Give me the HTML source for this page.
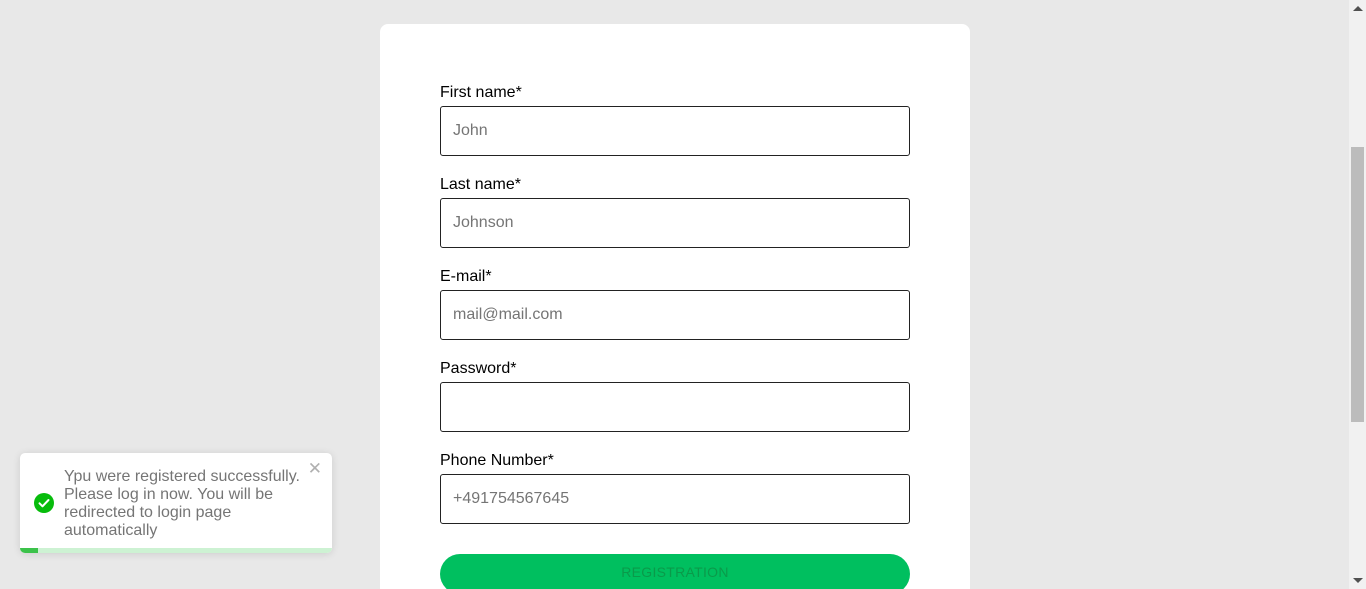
<!DOCTYPE html>
<html><head><meta charset="utf-8"><style>
*{box-sizing:border-box;margin:0;padding:0}
html,body{width:1366px;height:589px;overflow:hidden;background:#e8e8e8;font-family:"Liberation Sans",Arial,sans-serif}
.wrap{position:relative;width:1366px;height:589px;overflow:hidden}
.card{position:absolute;left:380px;top:24px;width:590px;height:580px;background:#fff;border-radius:8px}
.lbl{position:absolute;left:440px;font-size:16px;color:#000}
.inp{position:absolute;left:440px;width:470px;height:50px;border:1px solid #222;border-radius:3px;background:#fff;font-size:16px;color:#757575;padding:14px 12px;line-height:20px}
.btn{position:absolute;left:440px;top:554px;width:470px;height:40px;border-radius:20px;background:#00bf5f;color:#0a9a4a;font-size:14px;text-align:center;line-height:36px;letter-spacing:0.3px}
.sb{position:absolute;left:1349px;top:0;width:17px;height:589px;background:#f1f1f1}
.th{position:absolute;left:1351px;top:147px;width:13px;height:275px;background:#bcbcbc}
.toast{position:absolute;left:20px;top:453px;width:312px;height:100px;background:#fff;border-radius:5px;box-shadow:0 1px 8px rgba(0,0,0,.12);overflow:hidden}
.toast .t{position:absolute;left:44px;top:15px;font-size:16px;line-height:18px;color:#757575;width:250px}
.toast .x{position:absolute;right:10px;top:6px;font-size:17px;color:#b0b0b0}
.bar{position:absolute;left:0;bottom:0;width:312px;height:5px;background:#cdf2d3}
.bar i{position:absolute;left:0;top:0;width:18px;height:5px;background:#3cc24b}
</style></head><body><div class="wrap">
<div class="card"></div>
<div class="lbl" style="top:84px">First name*</div>
<div class="inp" style="top:106px">John</div>
<div class="lbl" style="top:176px">Last name*</div>
<div class="inp" style="top:198px">Johnson</div>
<div class="lbl" style="top:268px">E-mail*</div>
<div class="inp" style="top:290px">mail@mail.com</div>
<div class="lbl" style="top:360px">Password*</div>
<div class="inp" style="top:382px"></div>
<div class="lbl" style="top:452px">Phone Number*</div>
<div class="inp" style="top:474px">+491754567645</div>
<div class="btn">REGISTRATION</div>
<div class="sb"></div><div class="th"></div>
<svg style="position:absolute;left:1353px;top:6px" width="10" height="5"><path d="M0 5L5 0L10 5Z" fill="#505050"/></svg>
<svg style="position:absolute;left:1353px;top:578px" width="10" height="5"><path d="M0 0L5 5L10 0Z" fill="#505050"/></svg>
<div class="toast">
<svg style="position:absolute;left:14px;top:40px" width="20" height="20" viewBox="0 0 20 20"><circle cx="10" cy="10" r="10" fill="#07bc0c"/><path d="M5.5 10.3l3 3 6-6.3" stroke="#fff" stroke-width="2" fill="none" stroke-linecap="round" stroke-linejoin="round"/></svg>
<div class="t">Ypu were registered successfully. Please log in now. You will be redirected to login page automatically</div>
<div class="x">✕</div>
<div class="bar"><i></i></div>
</div>
</div></body></html>
